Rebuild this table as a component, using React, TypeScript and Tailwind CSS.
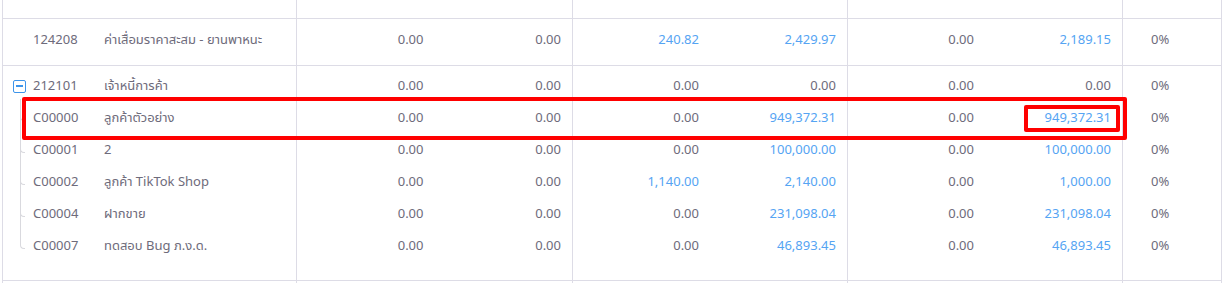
const groups = [
  {
    pt: "pt-[5px]",
    pb: "pb-[9px]",
    rows: [
      { code: "124208", name: "ค่าเสื่อมราคาสะสม - ยานพาหนะ", kind: "plain", v: ["0.00", "0.00", "240.82", "2,429.97", "0.00", "2,189.15"] },
    ],
  },
  {
    pt: "pt-[4px]",
    pb: "pb-[18px]",
    rows: [
      { code: "212101", name: "เจ้าหนี้การค้า", kind: "parent", v: ["0.00", "0.00", "0.00", "0.00", "0.00", "0.00"] },
      { code: "C00000", name: "ลูกค้าตัวอย่าง", kind: "child", v: ["0.00", "0.00", "0.00", "949,372.31", "0.00", "949,372.31"] },
      { code: "C00001", name: "2", kind: "child", v: ["0.00", "0.00", "0.00", "100,000.00", "0.00", "100,000.00"] },
      { code: "C00002", name: "ลูกค้า TikTok Shop", kind: "child", v: ["0.00", "0.00", "1,140.00", "2,140.00", "0.00", "1,000.00"] },
      { code: "C00004", name: "ฝากขาย", kind: "child", v: ["0.00", "0.00", "0.00", "231,098.04", "0.00", "231,098.04"] },
      { code: "C00007", name: "ทดสอบ Bug ภ.ง.ด.", kind: "last", v: ["0.00", "0.00", "0.00", "46,893.45", "0.00", "46,893.45"] },
    ],
  },
];

function Num({ value }: { value: string }) {
  const blue = value !== "0.00";
  return (
    <div className={`flex-1 pr-[11px] text-right ${blue ? "text-[#55a4f3]" : "text-[#6e6b7b]"}`}>{value}</div>
  );
}

function Lead({ kind }: { kind: string }) {
  if (kind === "parent") {
    return (
      <div className="w-[30px] self-stretch flex items-center">
        <div className="ml-[10px] w-[13px] h-[13px] border-[1.5px] border-[#3d94ea] rounded-[2px] flex items-center justify-center bg-white">
          <div className="w-[7px] h-[2px] bg-[#3d94ea]" />
        </div>
      </div>
    );
  }
  if (kind === "child" || kind === "last") {
    return (
      <div className="w-[30px] self-stretch relative">
        {kind === "child" && <div className="absolute left-[17px] -top-[3px] bottom-0 border-l border-[#d9d9de]" />}
        <div className="absolute left-[17px] -top-[3px] h-[22px] w-[5px] border-l border-b border-[#d9d9de] rounded-bl-[4px]" />
      </div>
    );
  }
  return <div className="w-[30px]" />;
}

export default function App() {
  const line = "border-[#dddce6]";
  return (
    <div
      className="relative w-[1225px] h-[283px] bg-white overflow-hidden text-[13px] text-[#6e6b7b]"
      style={{ fontFamily: '"Noto Sans", "Noto Sans Thai", sans-serif' }}
    >
      <div className={`ml-[2px] w-[1220px] border-l border-r ${line}`}>
        <div className={`grid grid-cols-[294px_276px_275px_275px_98px] h-[19px] border-b ${line}`}>
          <div className={`border-r ${line}`} />
          <div className={`border-r ${line}`} />
          <div className={`border-r ${line}`} />
          <div className={`border-r ${line}`} />
          <div />
        </div>
        {groups.map((g, gi) => (
          <div key={gi} className={`grid grid-cols-[294px_276px_275px_275px_98px] border-b ${line}`}>
            <div className={`border-r ${line} ${g.pt} ${g.pb}`}>
              {g.rows.map((r) => (
                <div key={r.code} className="flex h-[32px] items-center">
                  <Lead kind={r.kind} />
                  <div className="w-[71px]">{r.code}</div>
                  <div className="whitespace-nowrap">{r.name}</div>
                </div>
              ))}
            </div>
            {[0, 1, 2].map((c) => (
              <div key={c} className={`border-r ${line} ${g.pt} ${g.pb}`}>
                {g.rows.map((r) => (
                  <div key={r.code} className="flex h-[32px] items-center">
                    <Num value={r.v[c * 2]} />
                    <Num value={r.v[c * 2 + 1]} />
                  </div>
                ))}
              </div>
            ))}
            <div className={`${g.pt} ${g.pb}`}>
              {g.rows.map((r) => (
                <div key={r.code} className="flex h-[32px] items-center pl-[28px]">0%</div>
              ))}
            </div>
          </div>
        ))}
        <div className="grid grid-cols-[294px_276px_275px_275px_98px] h-[10px]">
          <div className={`border-r ${line}`} />
          <div className={`border-r ${line}`} />
          <div className={`border-r ${line}`} />
          <div className={`border-r ${line}`} />
          <div />
        </div>
      </div>

      <div className="absolute left-[22px] top-[97px] w-[1105px] h-[43px] border-4 border-[#ff0000] rounded-[2px]" />
      <div className="absolute left-[1024px] top-[105px] w-[96px] h-[27px] border-4 border-[#ff0000] rounded-[2px]" />
    </div>
  );
}
